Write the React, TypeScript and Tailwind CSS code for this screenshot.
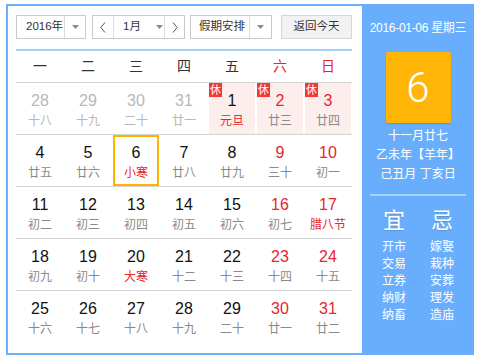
import React from 'react'

type Day = {
  d: number
  l: string
  other?: boolean
  red?: boolean
  fest?: boolean
  rest?: boolean
  sel?: boolean
}

const weekNames = ['一', '二', '三', '四', '五', '六', '日']

const rows: Day[][] = [
  [
    { d: 28, l: '十八', other: true },
    { d: 29, l: '十九', other: true },
    { d: 30, l: '二十', other: true },
    { d: 31, l: '廿一', other: true },
    { d: 1, l: '元旦', fest: true, rest: true },
    { d: 2, l: '廿三', red: true, rest: true },
    { d: 3, l: '廿四', red: true, rest: true },
  ],
  [
    { d: 4, l: '廿五' },
    { d: 5, l: '廿六' },
    { d: 6, l: '小寒', fest: true, sel: true },
    { d: 7, l: '廿八' },
    { d: 8, l: '廿九' },
    { d: 9, l: '三十', red: true },
    { d: 10, l: '初一', red: true },
  ],
  [
    { d: 11, l: '初二' },
    { d: 12, l: '初三' },
    { d: 13, l: '初四' },
    { d: 14, l: '初五' },
    { d: 15, l: '初六' },
    { d: 16, l: '初七', red: true },
    { d: 17, l: '腊八节', red: true, fest: true },
  ],
  [
    { d: 18, l: '初九' },
    { d: 19, l: '初十' },
    { d: 20, l: '大寒', fest: true },
    { d: 21, l: '十二' },
    { d: 22, l: '十三' },
    { d: 23, l: '十四', red: true },
    { d: 24, l: '十五', red: true },
  ],
  [
    { d: 25, l: '十六' },
    { d: 26, l: '十七' },
    { d: 27, l: '十八' },
    { d: 28, l: '十九' },
    { d: 29, l: '二十' },
    { d: 30, l: '廿一', red: true },
    { d: 31, l: '廿二', red: true },
  ],
]

const yi = ['开市', '交易', '立券', '纳财', '纳畜']
const ji = ['嫁娶', '栽种', '安葬', '理发', '造庙']

const Caret = () => (
  <svg width="7" height="4" viewBox="0 0 7 4" className="block">
    <path d="M0 0h7L3.5 4z" fill="#8a8a8a" />
  </svg>
)

const Chevron = ({ dir }: { dir: 'l' | 'r' }) => (
  <svg width="6" height="11" viewBox="0 0 6 11" className="block">
    <path d={dir === 'l' ? 'M5 0.5L0.8 5.5L5 10.5' : 'M1 0.5L5.2 5.5L1 10.5'} fill="none" stroke="#555" strokeWidth="1" />
  </svg>
)

const DayCell = ({ day }: { day: Day }) => {
  const numColor = day.other ? 'text-[#b8b8b8]' : day.red ? 'text-[#e8242c]' : 'text-[#111]'
  const lunarColor = day.other ? 'text-[#b8b8b8]' : day.fest ? 'text-[#e8242c]' : 'text-[#8a8a8a]'

  if (day.sel) {
    return (
      <div className="mx-px flex flex-col items-center border-2 border-[#ffb400] pt-[7px]">
        <span className={`text-[16px] leading-[18px] ${numColor}`}>{day.d}</span>
        <span className={`mt-[4px] text-[12px] leading-[14px] ${lunarColor}`}>{day.l}</span>
      </div>
    )
  }

  return (
    <div className={`relative mx-px flex flex-col items-center pt-[9px] ${day.rest ? 'bg-[#fdeeee]' : ''}`}>
      {day.rest && (
        <span className="absolute left-0 top-0 flex h-[14px] w-[13px] items-center justify-center bg-[#f5372f] text-[11px] leading-none text-white">
          休
        </span>
      )}
      <span className={`text-[16px] leading-[18px] ${numColor}`}>{day.d}</span>
      <span className={`mt-[4px] whitespace-nowrap text-[12px] leading-[14px] ${lunarColor}`}>{day.l}</span>
    </div>
  )
}

export default function App() {
  return (
    <div className="h-[360px] w-[480px] bg-white pl-[6px] pt-[4px] font-['Liberation_Sans','Noto_Sans_CJK_SC',sans-serif]">
      <div className="flex">
        {/* left: calendar grid */}
        <div className="h-[351px] w-[356px] border-y-2 border-l-2 border-[#6cb0f8] pl-[8px] pr-[10px] pt-[9px]">
          {/* toolbar */}
          <div className="flex h-[24px] items-stretch whitespace-nowrap text-[11.5px] text-[#333]">
            <div className="flex w-[70px] border border-[#c9c9c9]">
              <span className="flex flex-1 items-center pl-[9px]">2016年</span>
              <span className="flex w-[21px] shrink-0 items-center justify-center border-l border-[#dcdcdc]">
                <Caret />
              </span>
            </div>
            <div className="ml-[6px] flex w-[93px] border border-[#c9c9c9]">
              <span className="flex w-[21px] shrink-0 items-center justify-center border-r border-[#dcdcdc]">
                <Chevron dir="l" />
              </span>
              <span className="flex flex-1 items-center pl-[9px]">
                1月
                <span className="ml-[15px]">
                  <Caret />
                </span>
              </span>
              <span className="flex w-[20px] shrink-0 items-center justify-center border-l border-[#dcdcdc]">
                <Chevron dir="r" />
              </span>
            </div>
            <div className="ml-[5px] flex w-[82px] border border-[#c9c9c9]">
              <span className="flex min-w-0 flex-1 items-center pl-[8px]">假期安排</span>
              <span className="flex w-[22px] shrink-0 items-center justify-center border-l border-[#dcdcdc]">
                <Caret />
              </span>
            </div>
            <button className="ml-[9px] flex w-[71px] items-center justify-center border border-[#d6d6d6] bg-[#f2f2f2] text-[11.5px] text-[#333]">
              返回今天
            </button>
          </div>

          <div className="mt-[10px] h-[2px] bg-[#a4d0f8]" />

          {/* week names */}
          <div className="grid h-[32px] grid-cols-7 items-center border-b border-[#d3d3d3] text-[14px]">
            {weekNames.map((w, i) => (
              <span key={w} className={`text-center ${i >= 5 ? 'text-[#e8242c]' : 'text-[#333]'}`}>
                {w}
              </span>
            ))}
          </div>

          {/* day rows */}
          {rows.map((row, ri) => (
            <div
              key={ri}
              className={`grid h-[52px] grid-cols-7 ${ri < rows.length - 1 ? 'border-b border-[#d3d3d3]' : ''}`}
            >
              {row.map((day, di) => (
                <DayCell key={di} day={day} />
              ))}
            </div>
          ))}
        </div>

        {/* right: detail panel */}
        <div className="flex h-[351px] w-[112px] flex-col items-center bg-[#69aefc] pt-[16px] text-white">
          <div className="whitespace-nowrap text-[12px] leading-[16px] tracking-[-0.3px]">2016-01-06 星期三</div>
          <div className="mt-[16px] flex h-[71px] w-[65px] items-center justify-center rounded-[2px] bg-[#ffb606] shadow-[0_1px_2px_rgba(0,0,0,0.15)]">
            <span className="font-['Roboto',sans-serif] text-[42px] font-light leading-none">6</span>
          </div>
          <div className="mt-[4px] flex flex-col items-center whitespace-nowrap text-[12px] leading-[19px]">
            <span>十一月廿七</span>
            <span>乙未年【羊年】</span>
            <span>己丑月 丁亥日</span>
          </div>
          <div className="mt-[10px] h-[2px] w-[96px] bg-[#a9d1fd]" />
          <div className="mt-[12px] grid w-[96px] grid-cols-2 text-center">
            <span className="text-[22px] leading-[26px] [text-shadow:0_1px_1px_rgba(0,0,0,0.15)]">宜</span>
            <span className="text-[22px] leading-[26px] [text-shadow:0_1px_1px_rgba(0,0,0,0.15)]">忌</span>
            <div className="mt-[5px] flex flex-col text-[12px] leading-[17px]">
              {yi.map((t) => (
                <span key={t}>{t}</span>
              ))}
            </div>
            <div className="mt-[5px] flex flex-col text-[12px] leading-[17px]">
              {ji.map((t) => (
                <span key={t}>{t}</span>
              ))}
            </div>
          </div>
        </div>
      </div>
    </div>
  )
}
